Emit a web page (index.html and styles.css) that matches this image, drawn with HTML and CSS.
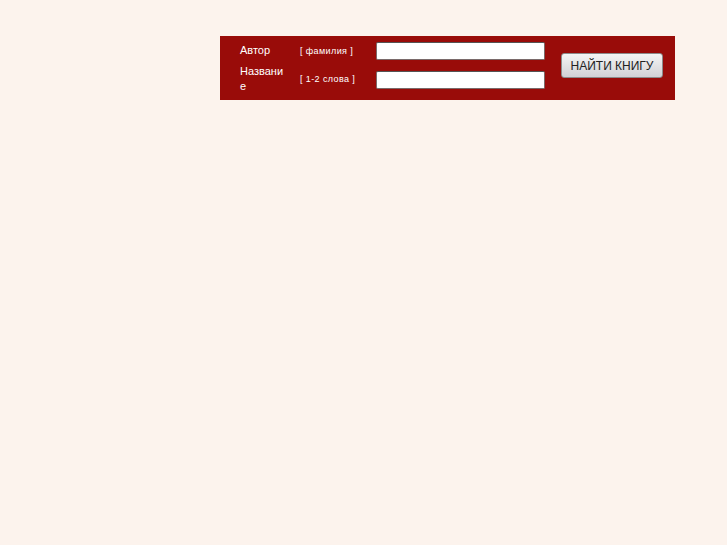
FILE: index.html
```
<!DOCTYPE html>
<html lang="ru">
<head>
<meta charset="utf-8">
<title>Поиск книги</title>
<link rel="stylesheet" href="styles.css">
</head>
<body>
<form class="search">
  <div class="label r1">Автор</div>
  <div class="hint r1">[ фамилия ]</div>
  <div class="field r1"><input type="text" class="inp"></div>
  <div class="label r2">Названи е</div>
  <div class="hint r2">[ 1-2 слова ]</div>
  <div class="field r2"><input type="text" class="inp"></div>
  <div class="btncell"><button type="button" class="btn">НАЙТИ КНИГУ</button></div>
</form>
</body>
</html>
```
FILE: styles.css
```
html, body { margin: 0; padding: 0; background: #fcf3ed; }
body { font-family: "Liberation Sans", Arial, sans-serif; }
.search {
  margin: 36px 0 0 220px;
  width: 455px;
  height: 64px;
  box-sizing: border-box;
  background: #990c09;
  display: grid;
  grid-template-columns: 60px 76px 169px 16px 102px;
  grid-template-rows: 19px 30px;
  row-gap: 4px;
  padding: 5px 0 0 20px;
  align-items: center;
}
.label { color: #fff; font-size: 11px; line-height: 15px; width: 44px; grid-column: 1; }
.hint { color: #fff; font-size: 9px; letter-spacing: 0.4px; grid-column: 2; }
.field { grid-column: 3; }
.field.r2 { padding-top: 2px; }
.r1 { grid-row: 1; }
.r2 { grid-row: 2; }
.inp {
  display: block;
  width: 169px;
  height: 18px;
  box-sizing: border-box;
  margin: 0;
  border: 1px solid #7a6a6a;
  border-top-color: #555;
  border-radius: 2px;
  background: #fff;
  padding: 0 3px;
}
.btncell { grid-column: 5; grid-row: 1 / 3; align-self: start; margin-top: 12px; }
.btn {
  display: block;
  width: 102px;
  height: 25px;
  margin: 0;
  padding: 0;
  border: 1px solid #8c8c8c;
  border-radius: 3px;
  background: linear-gradient(#f4f4f4, #d2d2d6);
  color: #222;
  font-family: "Liberation Sans", Arial, sans-serif;
  font-size: 12px;
}
```
